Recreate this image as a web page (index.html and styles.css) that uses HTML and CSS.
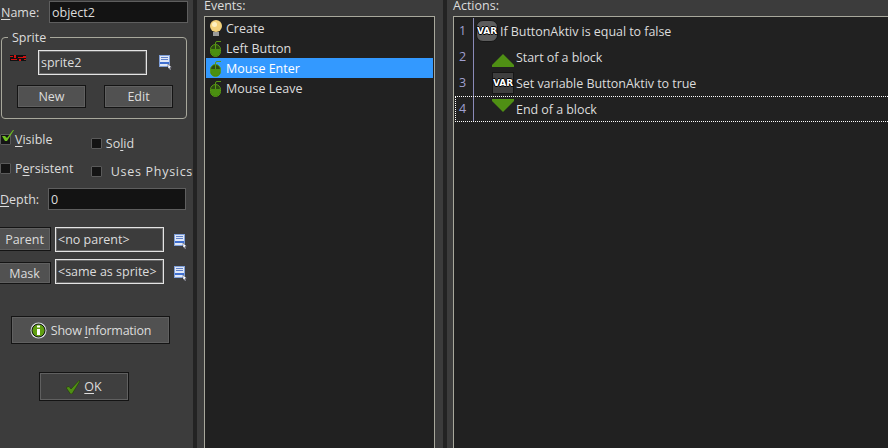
FILE: index.html
```html
<!DOCTYPE html>
<html lang="en">
<head>
  <meta charset="UTF-8">
  <title>Object Properties</title>
  <link rel="stylesheet" href="styles.css">
</head>
<body>
  <svg class="defs" width="0" height="0">
    <symbol id="doc" viewBox="0 0 14 15">
      <path fill="#7f9fd8" d="M0 0h11v12H0z"/>
      <path fill="#dfe7f6" d="M1 1h9v10H1z"/>
      <path fill="#5f80c8" d="M2 2h7v1H2zM2 4h7v1H2z"/>
      <path fill="#3f6fd0" d="M1 7h9v2H1z"/>
      <path fill="#fff" stroke="#223" stroke-width=".4" d="M9 9l4 3.500h-2l1 2-1 .5-1-2-1 1z"/>
    </symbol>
    <symbol id="mouse" viewBox="0 0 14 17">
      <path fill="none" stroke="#5a9a14" d="M6.500 5V3Q6.500 1.500 8 1.500h4"/>
      <rect x="1.500" y="4.500" width="10" height="12" rx="5" fill="#2c4a12" stroke="#5a9a14"/>
      <path fill="#4a8f10" d="M2 9h9v3q0 4-4.500 4T2 12z"/>
      <path stroke="#5a9a14" d="M6.500 5v4"/>
    </symbol>
  </svg>

  <div class="window">
    <aside class="props">
      <div class="name-row">
        <label class="lbl"><u>N</u>ame:</label>
        <div class="field dark name-field">object2</div>
      </div>

      <fieldset class="sprite">
        <legend>Sprite</legend>
        <div class="sprite-row">
          <svg class="thumb" width="16" height="6" viewBox="0 0 16 6">
            <path fill="#111" d="M0 0h16v6H0z"/>
            <path fill="#d01010" d="M0 1h3v1H0zM4 0h2v3H4zM8 2h5v1H8zM1 4h6v1H1zM9 4h2v2H9zM13 1h3v2h-3zM14 4h2v1h-2z"/>
          </svg>
          <div class="field bright sprite-field">sprite2</div>
          <svg class="doc" width="14" height="15"><use href="#doc"/></svg>
        </div>
        <div class="sprite-btns">
          <button class="btn sprite-btn">New</button>
          <button class="btn sprite-btn">Edit</button>
        </div>
      </fieldset>

      <div class="checks">
        <div class="check-col first">
          <div class="check checked">
            <span class="box"></span>
            <svg class="tick" width="14" height="12" viewBox="0 0 14 12"><path fill="#6fc020" d="M1 6h3l2 2 6-8h1L6 11H4z"/></svg>
            <span><u>V</u>isible</span>
          </div>
          <div class="check"><span class="box"></span><span>P<u>e</u>rsistent</span></div>
        </div>
        <div class="check-col second">
          <div class="check"><span class="box"></span><span>So<u>l</u>id</span></div>
          <div class="check wide"><span class="box"></span><span>Uses Physics</span></div>
        </div>
      </div>

      <div class="depth-row">
        <label class="lbl"><u>D</u>epth:</label>
        <div class="field dark depth-field">0</div>
      </div>

      <div class="link-row parent-row">
        <button class="btn link-btn">Parent</button>
        <div class="field bright link-field">&lt;no parent&gt;</div>
        <svg class="doc" width="14" height="15"><use href="#doc"/></svg>
      </div>
      <div class="link-row mask-row">
        <button class="btn link-btn">Mask</button>
        <div class="field bright link-field">&lt;same as sprite&gt;</div>
        <svg class="doc" width="14" height="15"><use href="#doc"/></svg>
      </div>

      <button class="btn info-btn">
        <svg width="17" height="17" viewBox="0 0 17 17">
          <circle cx="8.500" cy="8.500" r="8" fill="#d8dce0"/>
          <circle cx="8.500" cy="8.500" r="6.500" fill="#5f9e10" stroke="#111"/>
          <path fill="#fff" d="M7 3.500h3v2H7zM7 7h3v6H7z"/>
        </svg>
        <span class="info-text">Show <u>I</u>nformation</span>
      </button>

      <button class="btn ok-btn">
        <svg width="14" height="14" viewBox="0 0 14 14"><path fill="#4f8f14" stroke="#1c3006" stroke-width=".5" d="M0 7.500l3-1 2 2.500L13 .5l1 .5-8 13H4.500z"/></svg>
        <span><u>O</u>K</span>
      </button>
    </aside>

    <section class="events">
      <div class="head">Events:</div>
      <ul class="list">
        <li class="ev">
          <svg width="14" height="17" viewBox="0 0 14 17">
            <circle cx="7" cy="6" r="6" fill="#f3d27c"/>
            <circle cx="5.500" cy="4.500" r="2.500" fill="#fdf0c0"/>
            <path fill="#9a9a9a" d="M4 12h6v4H4z"/>
          </svg>
          Create
        </li>
        <li class="ev"><svg width="14" height="17"><use href="#mouse"/></svg>Left Button</li>
        <li class="ev active"><svg width="14" height="17"><use href="#mouse"/></svg>Mouse Enter</li>
        <li class="ev"><svg width="14" height="17"><use href="#mouse"/></svg>Mouse Leave</li>
      </ul>
    </section>

    <section class="actions">
      <div class="head">Actions:</div>
      <ol class="list act-list">
        <li class="act">
          <span class="num">1</span>
          <span class="var round">VAR</span>
          <span>If ButtonAktiv is equal to false</span>
        </li>
        <li class="act">
          <span class="num">2</span>
          <span class="icon indent"><svg width="22" height="22" viewBox="0 0 22 22"><path fill="#4f8f14" d="M11 8l11 11v2H0v-2z"/></svg></span>
          <span>Start of a block</span>
        </li>
        <li class="act">
          <span class="num">3</span>
          <span class="var square indent">VAR</span>
          <span>Set variable ButtonAktiv to true</span>
        </li>
        <li class="act current">
          <span class="num">4</span>
          <span class="icon indent"><svg width="22" height="22" viewBox="0 0 22 22"><path fill="#4f8f14" d="M0 1h22v2L11 14 0 3z"/></svg></span>
          <span>End of a block</span>
        </li>
      </ol>
    </section>
  </div>
</body>
</html>
```

FILE: styles.css
```css
* {
  box-sizing: border-box;
}
html, body {
  margin: 0;
  height: 100%;
  overflow: hidden;
}
body {
  font-family: "Open Sans", "DejaVu Sans", sans-serif;
  font-size: 12.5px;
  color: #dcdcdc;
  background: #3c3c3c;
}
.defs {
  display: block;
  height: 0;
}
u {
  text-underline-offset: 2px;
}
.window {
  display: flex;
  height: 448px;
}

/* left column */
.props {
  width: 197px;
  flex: none;
  padding-top: 1px;
  border-right: 4px solid #232323;
  background: #3c3c3c;
  display: flex;
  flex-direction: column;
}
.lbl {
  flex: none;
}
.field {
  display: flex;
  align-items: center;
  padding-left: 2px;
  white-space: nowrap;
}
.field.dark {
  background: #131313;
  border: 1px solid #5e5e5e;
}
.field.bright {
  background: #3c3c3c;
  border: 1px solid #e4e4e4;
  outline: 1px solid #6a6a6a;
  outline-offset: -2px;
}
.name-row {
  display: flex;
  align-items: center;
  height: 22px;
}
.name-row .lbl {
  width: 49px;
  padding-left: 1px;
}
.name-field {
  width: 139px;
  height: 22px;
}
.sprite {
  margin: 7px 0 0 1px;
  padding: 0;
  width: 186px;
  height: 89px;
  border: 1px solid #a8a89c;
  border-radius: 4px;
}
.sprite legend {
  margin-left: 6px;
  padding: 0 4px;
  line-height: 15px;
}
.sprite-row {
  display: flex;
  align-items: center;
  margin-top: 5px;
  height: 25px;
}
.thumb {
  margin: 0 0 10px 8px;
}
.sprite-field {
  width: 109px;
  height: 25px;
  margin-left: 12px;
}
.doc {
  flex: none;
}
.sprite-row .doc {
  margin: 0 0 0 12px;
}
.btn {
  font: inherit;
  color: #dcdcdc;
  background: #515151;
  border: 1px solid #141414;
  outline: 1px solid #606060;
  outline-offset: -2px;
  padding: 0;
  display: flex;
  align-items: center;
  justify-content: center;
  gap: 4px;
}
.sprite-btns {
  display: flex;
  gap: 18px;
  margin: 10px 0 0 15px;
}
.sprite-btn {
  width: 69px;
  height: 23px;
}
.checks {
  display: flex;
  height: 63px;
  margin-top: 4px;
}
.check-col {
  display: flex;
  flex-direction: column;
}
.check-col.first {
  width: 91px;
  gap: 9px;
  padding-top: 6px;
}
.check-col.second {
  gap: 8px;
  padding-top: 10px;
}
.check {
  position: relative;
  display: flex;
  align-items: center;
  gap: 4px;
  height: 20px;
  white-space: nowrap;
}
.check.wide {
  gap: 9px;
  letter-spacing: 0.7px;
}
.box {
  width: 11px;
  height: 11px;
  flex: none;
  background: #141414;
  border: 1px solid #5a5a5a;
  border-radius: 1px;
}
.tick {
  position: absolute;
  left: 1px;
  top: 1px;
}
.depth-row {
  display: flex;
  align-items: center;
  height: 22px;
  margin-top: 2px;
}
.depth-row .lbl {
  width: 48px;
}
.depth-field {
  width: 138px;
  height: 22px;
}
.link-row {
  display: flex;
  align-items: center;
  height: 25px;
}
.parent-row {
  margin-top: 17px;
}
.mask-row {
  margin-top: 7px;
}
.link-btn {
  width: 53px;
  height: 24px;
  margin-left: -2px;
  align-self: flex-start;
}
.mask-row .link-btn {
  height: 22px;
  align-self: flex-end;
}
.link-field {
  width: 109px;
  height: 25px;
  margin-left: 4px;
}
.link-row .doc {
  margin: 4px 0 0 10px;
}
.info-btn {
  width: 159px;
  height: 28px;
  margin: 32px 0 0 11px;
}
.info-text {
  letter-spacing: -0.25px;
}
.ok-btn {
  width: 90px;
  height: 29px;
  margin: 28px 0 0 39px;
  background: #3f3f3f;
}

/* event and action lists */
.events, .actions {
  display: flex;
  flex-direction: column;
  background: #3c3c3c;
}
.events {
  width: 250px;
  flex: none;
  padding: 0 8px 0 7px;
  border-right: 4px solid #232323;
}
.actions {
  flex: 1;
  padding-left: 6px;
}
.head {
  height: 16px;
  line-height: 11px;
}
.list {
  flex: 1;
  margin: 0;
  padding: 1px;
  list-style: none;
  background: #212121;
  border: 1px solid #a8a89c;
  border-width: 1px 1px 0;
}
.ev {
  display: flex;
  align-items: center;
  gap: 3px;
  height: 20px;
  padding-left: 3px;
}
.ev.active {
  background: #3399ff;
  color: #fff;
}
.act-list {
  padding: 1px 0 0 1px;
  border-right: 0;
}
.act {
  display: flex;
  align-items: center;
  height: 26px;
  margin-right: -4px;
  letter-spacing: -0.05px;
}
.act.current {
  outline: 1px dotted #fff;
  outline-offset: -1px;
}
.num {
  width: 19px;
  height: 100%;
  flex: none;
  line-height: 26px;
  padding-left: 4px;
  color: #a0a0d0;
  border-right: 1px solid #8a8ab8;
}
.var, .icon {
  flex: none;
  width: 22px;
  height: 22px;
  margin-right: 2px;
}
.var {
  display: flex;
  align-items: center;
  justify-content: center;
  font-family: "DejaVu Sans", sans-serif;
  font-size: 9px;
  font-weight: bold;
  color: #fff;
  text-shadow: 1px 0 #000, -1px 0 #000, 0 1px #000, 0 -1px #000;
  background: #4e4e4e;
  border: 1px solid #161616;
}
.var.round {
  margin-left: 2px;
  border-radius: 7px;
  background: #5c5c5c;
}
.var.square {
  background: #3f3f3f;
}
.indent {
  margin-left: 18px;
}
.icon {
  display: block;
}
.icon svg {
  display: block;
}
```
